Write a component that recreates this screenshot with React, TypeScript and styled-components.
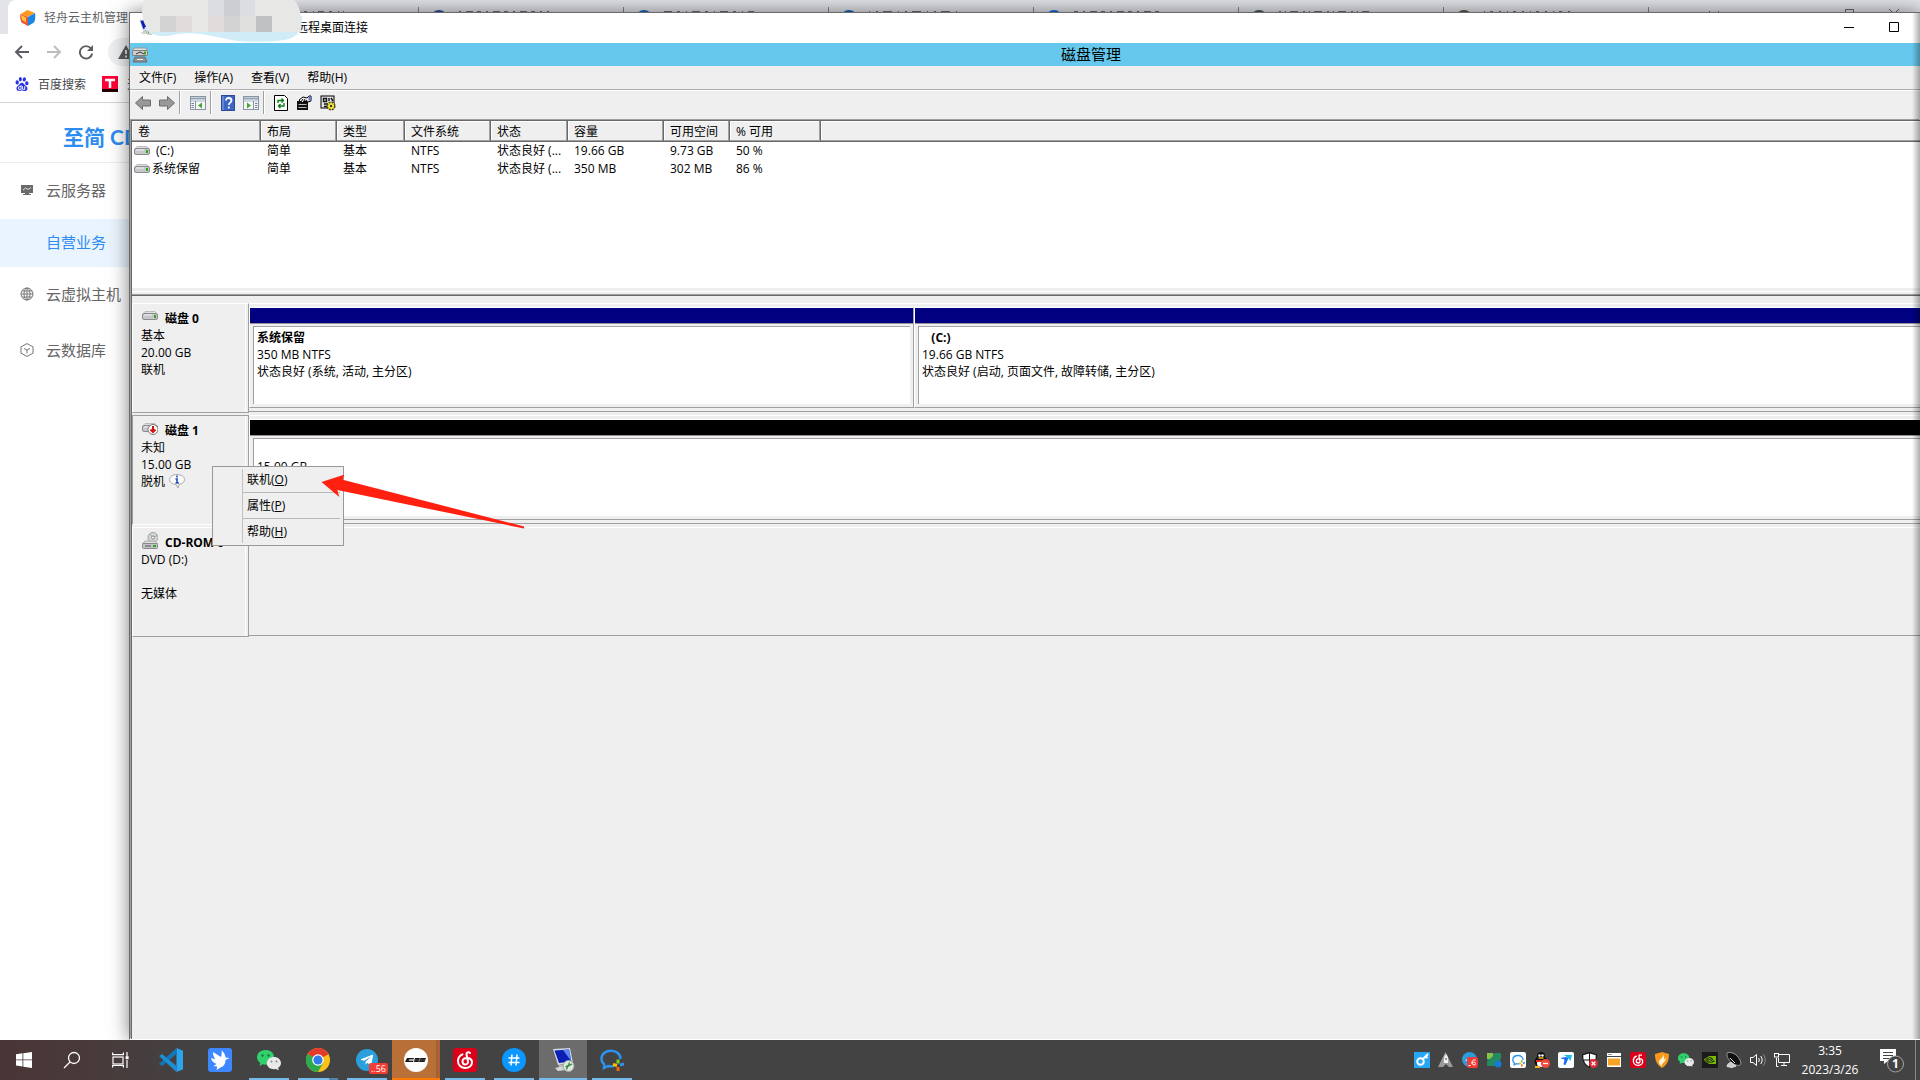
import React from "react";
import styled, { createGlobalStyle, css } from "styled-components";
import { SiBaidu, SiNvidia } from "react-icons/si";
import { FaTelegramPlane } from "react-icons/fa";

const face = "#efefef";
const shade = "#a0a0a0";
const edge = "#696969";

const GlobalStyle = createGlobalStyle`
  * { box-sizing: border-box; }
  html, body { margin: 0; }
  body {
    font-family: "Open Sans", "Noto Sans CJK SC", sans-serif;
    font-size: 12px;
    line-height: 17px;
    color: #000;
  }
  button {
    font: inherit;
    color: inherit;
    background: none;
    border: 0;
    padding: 0;
    display: flex;
    align-items: center;
    justify-content: center;
  }
  a { color: inherit; text-decoration: none; }
  svg { display: block; flex: none; }
`;

const Desktop = styled.div`
  display: flex;
  flex-direction: column;
  height: 100vh;
  overflow: hidden;
  background: #fff;
`;

const Workspace = styled.div`
  position: relative;
  flex: 1;
  min-height: 0;
  overflow: hidden;
`;

/* ---------- browser ---------- */

const Browser = styled.section`
  position: absolute;
  inset: 0;
  background: #fff;
`;

const TabStrip = styled.div`
  display: flex;
  height: 34px;
  padding-left: 8px;
  background: #e2e4e9;
  overflow: hidden;
`;

const ActiveTab = styled.button`
  && {
    flex: none;
    width: 206px;
    justify-content: flex-start;
    gap: 8px;
    padding: 1px 0 0 12px;
    background: #fff;
    border-radius: 8px 8px 0 0;
    color: #5f6368;
    white-space: nowrap;
    overflow: hidden;
  }
`;

const Tab = styled.button`
  && {
    flex: none;
    align-self: flex-start;
    width: 205px;
    height: 20px;
    margin-top: 7px;
    padding: 3px 0 0 12px;
    align-items: flex-start;
    justify-content: flex-start;
    gap: 12px;
    border-right: 1px solid #808386;
  }
`;

const StripControls = styled.div`
  display: flex;
  flex: 1;
  justify-content: flex-end;
  gap: 34px;
  padding: 9px 20px 0 0;
`;

const NavBar = styled.div`
  display: flex;
  align-items: center;
  gap: 16px;
  height: 36px;
  padding-left: 14px;
`;

const Omnibox = styled.label`
  display: flex;
  flex: 1;
  align-items: center;
  gap: 6px;
  height: 28px;
  margin-left: -2px;
  padding-left: 10px;
  border-radius: 14px;
  background: #eef0f2;
  input {
    flex: 1;
    border: 0;
    background: none;
  }
`;

const Bookmarks = styled.nav`
  display: flex;
  align-items: center;
  gap: 16px;
  height: 33px;
  padding: 0 0 4px 15px;
  border-bottom: 1px solid #d4d4d4;
  color: #45484b;
  a {
    display: flex;
    align-items: center;
    gap: 9px;
  }
`;

const Brand = styled.h1`
  margin: 0;
  height: 60px;
  padding: 8px 0 0 63px;
  border-bottom: 1px solid #ededed;
  font: bold 21px/52px Lato, "Noto Sans CJK SC", sans-serif;
  color: #2d8cf0;
`;

const SideLink = styled.a<{ $active?: boolean }>`
  display: flex;
  align-items: center;
  gap: 12px;
  height: ${(p) => (p.$active ? 48 : 56)}px;
  padding: 0 0 2px ${(p) => (p.$active ? 46 : 20)}px;
  font-size: 15px;
  background: ${(p) => (p.$active ? "#eaf4ff" : "none")};
  && { color: ${(p) => (p.$active ? "#2d8cf0" : "#666")}; }
`;

/* ---------- remote desktop window ---------- */

const RemoteWindow = styled.section`
  position: absolute;
  top: 12px;
  left: 129px;
  right: 0;
  bottom: 0;
  display: flex;
  flex-direction: column;
  border: solid #6b6b6e;
  border-width: 1px 0 0 1px;
  border-bottom: 1px solid #fff;
  background: ${face};
  box-shadow: 0 0 18px rgba(0, 0, 0, 0.5);
  &::after {
    content: "";
    position: absolute;
    inset: 0 0 0 auto;
    width: 8px;
    background: linear-gradient(90deg, transparent, rgba(0, 0, 0, 0.32));
    pointer-events: none;
  }
`;

const RemoteTitle = styled.header`
  display: flex;
  align-items: center;
  height: 30px;
  padding: 0 21px 2px 8px;
  background: #fff;
  span {
    flex: 1;
    padding-left: 142px;
  }
`;

const WindowButtons = styled.div`
  display: flex;
  gap: 35px;
`;

const ConsoleTitle = styled.header`
  display: flex;
  align-items: center;
  height: 23px;
  padding-left: 2px;
  background: #66c8ec;
  h2 {
    flex: 1;
    margin: 0;
    padding-left: 114px;
    font-size: 15px;
    font-weight: normal;
    text-align: center;
  }
`;

const MenuBar = styled.nav`
  display: flex;
  height: 24px;
  border-bottom: 1px solid #b0b0b0;
  button { padding: 0 9px; }
`;

const ToolBar = styled.div`
  display: flex;
  align-items: center;
  gap: 8px;
  height: 29px;
  padding: 0 0 5px 5px;
  border-top: 1px solid #fff;
`;

const ToolRule = styled.i`
  align-self: stretch;
  width: 2px;
  margin: 0 1px 0 -4px;
  border-left: 1px solid ${shade};
  border-right: 1px solid #fff;
`;

const Console = styled.div`
  display: flex;
  flex: 1;
  flex-direction: column;
  min-height: 0;
  border: solid ${edge};
  border-width: 1px 0 0 1px;
  box-shadow: -1px -1px 0 ${shade};
  margin: 1px 0 0 1px;
`;

const ListPane = styled.div`
  height: 167px;
  background: #fff;
`;

const VolumeTable = styled.table`
  width: 100%;
  table-layout: fixed;
  border-collapse: collapse;
  th {
    height: 21px;
    padding: 0 6px;
    font-weight: normal;
    text-align: left;
    background: ${face};
    box-shadow: inset -1px -1px 0 ${edge}, inset -2px -2px 0 ${shade}, inset 1px 1px 0 #fff;
  }
  th:last-child { box-shadow: inset 0 -1px 0 ${edge}, inset 0 -2px 0 ${shade}, inset 1px 1px 0 #fff; }
  td {
    height: 18px;
    padding: 0 6px 1px;
    line-height: 16px;
    white-space: nowrap;
  }
  td:first-child { padding: 0 2px 1px; }
`;

const VolumeName = styled.span<{ $indent?: boolean }>`
  display: flex;
  align-items: center;
  gap: ${(p) => (p.$indent ? 6 : 2)}px;
`;

const Splitter = styled.div`
  height: 8px;
  padding-top: 3px;
  background: ${face};
  border-bottom: 1px solid ${edge};
  box-shadow: inset 0 -1px 0 ${shade};
  &::before {
    content: "";
    display: block;
    border-top: 1px solid #fff;
  }
`;

const DiskPane = styled.div`
  position: relative;
  flex: 1;
  padding-top: 7px;
`;

const DiskRow = styled.article`
  display: grid;
  grid-template-columns: 117px 1fr;
  align-items: start;
  height: 112px;
`;

const DiskLabel = styled.div<{ $pressed?: boolean }>`
  height: 110px;
  padding: 6px 0 0 8px;
  border: 1px solid #fff;
  border-color: ${(p) => (p.$pressed ? `${shade} ${shade} #fff ${shade}` : `#fff ${shade} ${shade} #fff`)};
  box-shadow: inset -2px 0 0 ${face}, inset -3px 0 0 #fff;
  div {
    display: flex;
    gap: 4px;
    height: 17px;
  }
`;

const DiskName = styled.h3`
  display: flex;
  gap: 7px;
  margin: 0;
  padding-left: 1px;
  font-size: 12px;
  line-height: 17px;
  white-space: nowrap;
  svg { margin-top: -2px; }
`;

const Partitions = styled.div`
  display: flex;
  height: 109px;
  padding: 3px 0;
  border-top: 1px solid #fff;
  border-bottom: 1px solid ${shade};
`;

const Partition = styled.div<{ $wide?: boolean }>`
  display: flex;
  flex-direction: column;
  gap: 2px;
  ${(p) => (p.$wide ? "flex: 1;" : "width: 665px;")}
  padding-bottom: 3px;
  border: 1px solid ${shade};
  border-top-color: #fff;
  border-left-color: #fff;
  ${(p) => p.$wide && "border-right: 0;"}
`;

const Strip = styled.div<{ $color: string }>`
  height: 16px;
  background: ${(p) => p.$color};
  border-bottom: 1px solid #9a8f9a;
`;

const PartitionBody = styled.div<{ $wide?: boolean }>`
  flex: 1;
  margin: 0 ${(p) => (p.$wide ? 0 : 3)}px 0 3px;
  padding: 2px 3px;
  border: solid ${shade};
  border-width: 1px 0 0 1px;
  background: #fff;
  strong, span {
    display: block;
    min-height: 17px;
  }
  strong { white-space: pre; }
`;

const ContextMenu = styled.div`
  position: absolute;
  top: 170px;
  left: 80px;
  width: 132px;
  border: 1px solid #999;
  background: ${face};
  padding: 0 3px 0 29px;
  &::before {
    content: "";
    position: absolute;
    inset: 2px auto 2px 29px;
    border-left: 1px solid #c0c0c0;
  }
  button {
    width: 100%;
    height: 26px;
    padding-left: 5px;
    justify-content: flex-start;
    border-bottom: 1px solid #b8b8b8;
  }
  button:last-child {
    border-bottom: 0;
    padding-bottom: 2px;
  }
`;

const Pointer = styled.svg`
  position: absolute;
  top: 178px;
  left: 189px;
`;

const Smudge = styled.svg`
  position: absolute;
  top: 0;
  left: 142px;
`;

/* ---------- taskbar ---------- */

const Taskbar = styled.footer`
  display: flex;
  align-items: stretch;
  height: 40px;
  background: linear-gradient(90deg, #4a3536, #483b3b 110px, #434343 200px);
  color: #fff;
`;

const SystemButton = styled.button`
  width: 48px;
`;

const Apps = styled.div`
  display: flex;
  flex: 1;
  gap: 1px;
  padding-left: 3px;
`;

type AppState = "idle" | "open" | "stacked" | "active" | "alert";

const AppButton = styled.button<{ $state: AppState }>`
  && {
    position: relative;
    width: 48px;
    ${(p) => p.$state === "active" && "background: #6c6c6c;"}
    ${(p) => p.$state === "alert" && "background: linear-gradient(90deg, #b87038 44px, #985c30 44px, #a86434 45px);"}
  }
  &::after {
    content: "";
    position: absolute;
    bottom: 0;
    height: 2px;
    ${(p) =>
      p.$state === "active" || p.$state === "alert"
        ? css`left: 0; right: 0;`
        : css`left: 4px; right: 4px;`}
    background: ${(p) =>
      ({
        idle: "none",
        open: "#76b9ed",
        active: "#76b9ed",
        stacked: "linear-gradient(90deg, #76b9ed 31px, #5484ab 31px)",
        alert: "#ff7800",
      })[p.$state]};
  }
`;

const Tray = styled.div`
  display: flex;
  button { width: 24px; }
`;

const Tile = styled.span<{ $bg: string; $size: number; $radius?: number }>`
  display: flex;
  align-items: center;
  justify-content: center;
  width: ${(p) => p.$size}px;
  height: ${(p) => p.$size}px;
  border-radius: ${(p) => p.$radius ?? 2}px;
  background: ${(p) => p.$bg};
`;

const TrayClock = styled.button`
  && {
    flex-direction: column;
    width: 72px;
    line-height: 19px;
    padding-bottom: 1px;
  }
`;

const NoticeButton = styled.button`
  && {
    width: 49px;
    padding-left: 2px;
  }
`;

const ShowDesktop = styled.button`
  && {
    width: 5px;
    border-left: 1px solid #8a8a8a;
  }
`;

/* ---------- drawings ---------- */

const Drive = ({ children }: { children?: React.ReactNode }) => (
  <svg width="16" height="16" viewBox="0 0 16 16">
    <path d="M3 3.500h10l2.500 3H.5z" fill="#dfdfe2" stroke="#bdbdc0" />
    <rect x=".5" y="5.500" width="15" height="6" rx="1.500" fill="#c6c6cb" stroke="#8b8b92" />
    <path d="M2 7h8" stroke="#f2f2f2" />
    <rect x="12" y="7" width="2" height="3" fill="#2fa51c" />
    {children}
  </svg>
);

const OfflineDrive = () => (
  <Drive>
    <circle cx="11" cy="9.500" r="5" fill="#fff" stroke="#777" />
    <path d="M11 6v6M8.500 9.500L11 12l2.500-2.500" stroke="#d21414" strokeWidth="2" fill="none" />
  </Drive>
);

const DiscDrive = () => (
  <svg width="16" height="18" viewBox="0 0 16 18">
    <circle cx="11" cy="5.500" r="5" fill="#d6d6d6" stroke="#a0a0a0" />
    <path d="M11 5.500L7.500 2M11 5.500l4-2" stroke="#7fb48a" />
    <circle cx="11" cy="5.500" r="1.500" fill="#fff" stroke="#888" />
    <path d="M3 9h10l2.500 3H.5z" fill="#dcdcdc" stroke="#aaa" />
    <rect x=".5" y="11.500" width="15" height="5" rx="1" fill="#c3c3c8" stroke="#88888c" />
    <path d="M3 14h6" stroke="#555" />
    <rect x="11" y="13" width="3" height="2" fill="#2fa51c" />
  </svg>
);

const InfoBalloon = () => (
  <svg width="16" height="16" viewBox="0 0 16 16">
    <path d="M8 1.500c4 0 7.500 2 7.500 5s-3 4.700-5.500 5L9 15l-2-3.500c-3.500-.3-6.500-2.200-6.500-5s3.500-5 7.500-5z" fill="#fafafa" stroke="#a8a8a8" />
    <path d="M8 2.500v2M6.500 6H8v4M6.500 10h3.500" stroke="#1f52c4" strokeWidth="1.600" fill="none" />
  </svg>
);

const ConsoleIcon = () => (
  <svg width="16" height="16" viewBox="0 0 16 16">
    <path d="M3 10h10l2 5H1z" fill="#8b8f93" stroke="#6a6d70" />
    <path d="M2 1h12l1.500 4H.5z" fill="#e0e0e0" stroke="#999" />
    <rect x=".5" y="3.500" width="15" height="5" rx="1" fill="#cfcfcf" stroke="#7d7d7d" />
    <path d="M4 7l4-2 4 2" stroke="#333" fill="none" />
    <rect x="12" y="4.500" width="2" height="3" fill="#35a51c" />
    <path d="M5 12.500h6" stroke="#eee" />
  </svg>
);

const Arrow = ({ flip }: { flip?: boolean }) => (
  <svg width="16" height="16" viewBox="0 0 16 16">
    <path
      d={flip ? "M15.500 8L8.500 1.500v3.500H.5v6h8v3.500z" : "M.5 8l7-6.500v3.500h8v6h-8v3.500z"}
      fill="#989898"
      stroke="#6c6c6c"
    />
  </svg>
);

const PaneIcon = ({ flip }: { flip?: boolean }) => (
  <svg width="16" height="14" viewBox="0 0 16 14">
    <rect x=".5" y=".5" width="15" height="13" fill="#f7f7f7" stroke="#8a94a0" />
    <path d="M1 2.500h14" stroke="#8fa3bb" strokeWidth="2" />
    <path d="M1 5h14" stroke="#a9b6c4" />
    {flip ? (
      <>
        <path d="M10.500 5v9" stroke="#8a94a0" />
        <path d="M12 7.500h2.500M12 9.500h2.500M12 11.500h2.500" stroke="#6b83a5" />
        <path d="M4 6.500l4 3-4 3z" fill="#42a832" />
      </>
    ) : (
      <>
        <path d="M5.500 5v9" stroke="#8a94a0" />
        <path d="M1.500 7.500H4M1.500 9.500H4M1.500 11.500H4" stroke="#6b83a5" />
        <path d="M12 6.500l-4 3 4 3z" fill="#42a832" />
      </>
    )}
  </svg>
);

const HelpIcon = () => (
  <svg width="14" height="16" viewBox="0 0 14 16">
    <rect x=".5" y=".5" width="13" height="15" fill="#3d66c4" stroke="#2d4a96" />
    <path d="M2 1v14" stroke="#8ba6e6" />
    <path d="M5 5.500c0-3.500 5.500-3.200 5.500 0 0 2.200-2.700 2-2.700 4.500M7.800 11.500v2" stroke="#fff" strokeWidth="1.800" fill="none" />
  </svg>
);

const RefreshIcon = () => (
  <svg width="14" height="16" viewBox="0 0 14 16">
    <path d="M.5.500h10l3 3v12H.5z" fill="#fff" stroke="#000" />
    <path d="M4 8V5.500h5M7.500 3.500l2 2-2 2M10 8v3H5M6.500 9l-2 2 2 2" stroke="#0a7d1c" strokeWidth="1.400" fill="none" />
  </svg>
);

const PropertiesIcon = () => (
  <svg width="16" height="16" viewBox="0 0 16 16">
    <path d="M1 6h11v9H1z" fill="#111" />
    <path d="M2.500 9.500h8M2.500 12.500h8" stroke="#bbb" />
    <path d="M3 5l4-3 4 1 2-2h2v5l-3 1-3-1-3 2z" fill="#f4f4f4" stroke="#000" />
    <path d="M7 4l-2 3M9 4L7 8M11 5l-2 3" stroke="#000" />
    <path d="M12.500 1.500h3v4h-3z" fill="#6d78b8" />
  </svg>
);

const SettingsIcon = () => (
  <svg width="16" height="16" viewBox="0 0 16 16">
    <rect x="1" y="1" width="13" height="12" fill="#e4e4e4" stroke="#000" />
    <path d="M3.500 3.500h3v3h-3zM9 3v3M8 9H4M4 11.500h4M11 3l2 3" stroke="#111" strokeWidth="1.400" fill="none" />
    <circle cx="11" cy="11" r="3.800" fill="#f4e842" stroke="#4a4608" strokeWidth="1.500" strokeDasharray="2 1" />
    <circle cx="11" cy="11" r="1.200" fill="#333" />
  </svg>
);

const CubeIcon = () => (
  <svg width="16" height="16" viewBox="0 0 16 16">
    <path d="M7.500 0L15 3 8 7 .5 4z" fill="#ff9a1f" />
    <path d="M.5 4L8 7v9l-6.500-3.500C0 9 0 7 .5 4z" fill="#f0532d" />
    <path d="M15 3L8 7v9l6-3.500c1.500-3 1.500-6 1-9.500z" fill="#1689e8" />
    <path d="M1 5l5 2.500v5L2 10z" fill="#ffc43a" />
  </svg>
);

const BrowserArrow = ({ flip }: { flip?: boolean }) => (
  <svg width="16" height="16" viewBox="0 0 16 16">
    <path
      d={flip ? "M1 8h13M8 2l6 6-6 6" : "M15 8H2M8 2L2 8l6 6"}
      stroke={flip ? "#bbbdbf" : "#5a5d61"}
      strokeWidth="1.900"
      fill="none"
    />
  </svg>
);

const ReloadIcon = () => (
  <svg width="16" height="16" viewBox="0 0 16 16">
    <path d="M13 4.500A6.200 6.200 0 1 0 14.200 9.500" stroke="#5a5d61" strokeWidth="1.900" fill="none" />
    <path d="M15 1v6H9z" fill="#5a5d61" />
  </svg>
);

const WarningIcon = () => (
  <svg width="16" height="14" viewBox="0 0 16 14">
    <path d="M8 0l8 14H0z" fill="#5a5d61" />
    <path d="M8 5v4M8 10.500v2" stroke="#fff" strokeWidth="1.600" />
  </svg>
);

const ServerIcon = () => (
  <svg width="14" height="12" viewBox="0 0 14 12">
    <path d="M1 1h12v8H1zM5 9h4v1h2v1H3v-1h2z" fill="#6a6a6a" />
    <path d="M3 6l2.500-2L8 5.500l3-2" stroke="#ddd" fill="none" />
  </svg>
);

const GlobeIcon = () => (
  <svg width="14" height="14" viewBox="0 0 14 14" fill="none" stroke="#777">
    <circle cx="7" cy="7" r="6" />
    <ellipse cx="7" cy="7" rx="3" ry="6" />
    <path d="M7 1v12M1 7h12M2 4h10M2 10h10" />
  </svg>
);

const BoxIcon = () => (
  <svg width="14" height="14" viewBox="0 0 14 14" fill="none" stroke="#777">
    <path d="M7 .6l6 3.200v6.400l-6 3.200-6-3.200V3.800zM4 5.500L7 7l3-1.500M7 7v3.500" />
  </svg>
);

const RemoteIcon = ({ size }: { size: number }) => (
  <svg width={size} height={size} viewBox="0 0 24 24">
    <path d="M8 17h8l2 5H7z" fill="#b8b8b8" />
    <path d="M2 1l17-1 3 15-15 2z" fill="#d7dbe4" />
    <path d="M3.500 2.500L18 1.500l2.400 12L8 15z" fill="#0c1fb4" />
    <path d="M12 2L18 1.500l2.400 12z" fill="#5f86f0" />
    <path d="M4 20l9-2 2 4-8 1z" fill="#d5d5d5" />
    <circle cx="17.500" cy="18" r="5.500" fill="#dfe7df" stroke="#9aa79a" />
    <path d="M14.500 19l2.500-1.500-1.500 4M18.500 14.500l-1 3.500 3.500-2" stroke="#2b8a3a" strokeWidth="1.300" fill="none" />
  </svg>
);

const WeChatIcon = ({ size }: { size: number }) => (
  <svg width={size} height={size} viewBox="0 0 24 24">
    <path d="M8.500 2C4 2 0 5 0 9.300c0 2.500 1.300 4.400 3.300 5.700L2.500 18l3.300-1.700c6 1.500 11.200-2 11.200-7S13 2 8.500 2z" fill="#31d06c" />
    <circle cx="5.500" cy="7.500" r="1.200" fill="#157a3b" />
    <circle cx="11.500" cy="7.500" r="1.200" fill="#157a3b" />
    <path d="M17 9c-4 0-7.200 2.700-7.200 6.200 0 3.800 4 6.800 9 5.800l3 1.300-.7-2.500c1.700-1.200 2.900-2.800 2.900-4.600C24 11.700 21 9 17 9z" fill="#e9e9e9" />
    <circle cx="14.500" cy="13.500" r="1" fill="#888" />
    <circle cx="19.500" cy="13.500" r="1" fill="#888" />
  </svg>
);

const MusicIcon = ({ size }: { size: number }) => (
  <svg width={size} height={size} viewBox="0 0 24 24">
    <rect width="24" height="24" rx="3" fill="#dd001b" />
    <path
      d="M17 5c-1.500-1.300-4-.7-3.500 1.500l1.500 7c.3 1.800-1 3-2.700 3-1.600 0-2.800-1.200-2.800-2.900 0-2.200 1.800-3.600 4.500-3.600 3 0 5 1.800 5 4.500 0 3.200-3 5.500-6.700 5.500-4.300 0-7.300-3-7.300-6.800 0-3.200 1.700-5.700 4.500-6.900"
      stroke="#fff"
      strokeWidth="2"
      strokeLinecap="round"
      fill="none"
    />
  </svg>
);

const WindowsIcon = () => (
  <svg width="16" height="16" viewBox="0 0 16 16" fill="#fff">
    <path d="M0 2.200L6.500 1.300v6.200H0zM7.300 1.200L16 0v7.500H7.300zM0 8.300h6.500v6.200L0 13.600zM7.300 8.300H16V16l-8.700-1.200z" />
  </svg>
);

const SearchIcon = () => (
  <svg width="18" height="18" viewBox="0 0 18 18" fill="none" stroke="#fff" strokeWidth="1.300">
    <circle cx="11" cy="7" r="5.500" />
    <path d="M7 11l-6 6" />
  </svg>
);

const TaskViewIcon = () => (
  <svg width="17" height="16" viewBox="0 0 17 16" fill="none" stroke="#fff" strokeWidth="1.200">
    <rect x="1" y="5" width="10" height="7" />
    <path d="M.6.500v2.200h10.800V.5M.6 15.500v-2h10.800v2M15 0v4M15 8v8" />
    <rect x="14.200" y="4.800" width="1.800" height="1.800" fill="#fff" />
  </svg>
);

const CodeIcon = () => (
  <svg width="24" height="24" viewBox="0 0 24 24">
    <path d="M17.500 0L24 2.800v18.400L17.500 24z" fill="#2aa5ee" />
    <path d="M17.500 0v6L3 18 0 16z" fill="#1078b8" />
    <path d="M17.500 24v-6L3 6 0 8z" fill="#1b8fd6" />
  </svg>
);

const BirdIcon = () => (
  <svg width="24" height="24" viewBox="0 0 24 24">
    <rect width="24" height="24" rx="3" fill="#3f87ff" />
    <path d="M5 4l8 5c.500-2 1-4 .500-6.500 2.500 2 4 4.500 4 7l4 .5-4 2c0 4-2 6.500-5 7.500L8.500 22l.8-3.500L5.500 18l3-2C5 14.500 3.500 12.500 3 10l4.500 1.500C5.500 9 5 6.500 5 4z" fill="#fff" />
  </svg>
);

const ChromeIcon = () => (
  <svg width="24" height="24" viewBox="0 0 24 24">
    <circle cx="12" cy="12" r="12" fill="#fbc116" />
    <path d="M12 12L1.600 6A12 12 0 0 1 22.400 6z" fill="#e23b2e" />
    <path d="M1.600 6A12 12 0 0 0 12 24l5-9-5-3z" fill="#2da94f" />
    <path d="M12 6h10.400L12 12z" fill="#e23b2e" />
    <circle cx="12" cy="12" r="5.800" fill="#fff" />
    <circle cx="12" cy="12" r="4.600" fill="#2f7de9" />
  </svg>
);

const Badge = styled.span`
  position: absolute;
  right: 3px;
  bottom: 6px;
  padding: 0 2px;
  border-radius: 2px;
  background: #f23c34;
  font-size: 9px;
  line-height: 11px;
`;

const HashIcon = () => (
  <svg width="24" height="24" viewBox="0 0 24 24">
    <circle cx="12" cy="12" r="12" fill="#0c96ff" />
    <path d="M10 6.500L9 17.500M15 6.500l-1 11M6.500 10h11M6.500 14.500h11" stroke="#fff" strokeWidth="1.500" />
  </svg>
);

const RacerIcon = () => (
  <svg width="24" height="24" viewBox="0 0 24 24">
    <circle cx="12" cy="12" r="12" fill="#fff" />
    <path d="M3 10h7l-.5 1.200H5.500L5 12.800h4.500L9 14H1zM11 10h5l-1.500 4h-4.500zM16.500 10H22l-1.500 4H15z" fill="#161616" />
    <path d="M4 12h17" stroke="#777" strokeWidth=".6" />
  </svg>
);

const WeComIcon = ({ size }: { size: number }) => (
  <svg width={size} height={size} viewBox="0 0 24 24" fill="none">
    <path d="M20.500 11C20.500 6 16.500 2.800 11 2.800S1.500 6 1.500 10.500c0 3 1.200 4.800 2.800 6L4 20l4-2c2 .5 4 .5 6 0" stroke="#2c94ee" strokeWidth="2.400" />
    <path d="M18 11.500v4" stroke="#7ed321" strokeWidth="3" />
    <path d="M20 17l4-1" stroke="#2c94ee" strokeWidth="3" />
    <path d="M18 19v4" stroke="#fb6500" strokeWidth="3" />
    <path d="M13 16.500l4 1" stroke="#fcc000" strokeWidth="3" />
  </svg>
);

const KeyIcon = () => (
  <svg width="16" height="16" viewBox="0 0 16 16">
    <rect width="16" height="16" fill="#27a7f3" />
    <circle cx="6.500" cy="9.500" r="3.300" stroke="#fff" strokeWidth="2" fill="none" />
    <path d="M8.500 7.500L14 2M11 4l2.500 2" stroke="#fff" strokeWidth="2" />
  </svg>
);

const RocketIcon = () => (
  <svg width="16" height="16" viewBox="0 0 16 16">
    <path d="M7.500 0L15 15h-4l-3-3-3 3H0z" fill="#9b9b9b" />
    <path d="M8 2c2 2 2.500 5 2 9H6c-.5-4 0-7 2-9z" fill="#f2f2f2" />
    <circle cx="8" cy="7" r="1" fill="#777" />
  </svg>
);

const TrayTelegram = () => (
  <svg width="16" height="16" viewBox="0 0 16 16">
    <circle cx="7.500" cy="7.500" r="7.500" fill="#2d9cdb" />
    <path d="M3 8l4-1v3z" fill="#fff" />
    <rect x="5" y="5" width="11" height="11" rx="2" fill="#ee3d37" />
    <path d="M6.500 13.500h2M13.500 8c-3-.5-3.500 1-3.500 3s3.500 3 3.500.7-3.500-1.700-3.500 0" stroke="#fff" fill="none" />
  </svg>
);

const CloverIcon = () => (
  <svg width="16" height="16" viewBox="0 0 16 16">
    <path d="M1 1h6l1 1 1-1h6v6l-1 1 1 6-6-1-1 1H1V9l1-1-1-1z" fill="#258a62" />
    <path d="M1 1h6v3L4 7H1z" fill="#85c34b" />
    <circle cx="12" cy="12" r="3.500" fill="#167bd6" />
  </svg>
);

const PenguinIcon = () => (
  <svg width="16" height="16" viewBox="0 0 16 16">
    <ellipse cx="7" cy="9.500" rx="6.500" ry="5.500" fill="#111" />
    <circle cx="7" cy="4" r="4" fill="#111" />
    <ellipse cx="7" cy="11.500" rx="4" ry="3.500" fill="#fff" />
    <path d="M2 8h10v2H2z" fill="#e02a22" />
    <path d="M1 14h5v2H1z" fill="#fbb117" />
    <circle cx="5.500" cy="3.500" r="1.200" fill="#fff" />
    <circle cx="8.500" cy="3.500" r="1.200" fill="#fff" />
    <path d="M4.500 6h5" stroke="#fbb117" strokeWidth="1.500" />
    <circle cx="11.500" cy="11.500" r="4.500" fill="#ef4b3b" />
    <path d="M9 11.500h5" stroke="#fff" strokeWidth="1.300" />
  </svg>
);

const TodoIcon = () => (
  <svg width="16" height="16" viewBox="0 0 16 16">
    <rect width="16" height="16" rx="2" fill="#fff" />
    <path d="M6 3h8l-1.500 6L10 6z" fill="#17c0e8" />
    <path d="M2 6l6-1 2.500 1-3 7-2-.5 1-5z" fill="#1a6cf2" />
  </svg>
);

const ShieldIcon = () => (
  <svg width="16" height="16" viewBox="0 0 16 16">
    <path d="M7.500 0L15 2.500c0 6-2 10.500-7.500 13.500C2 13 0 8.500 0 2.500z" fill="#111" />
    <path d="M7 1.500L1.200 3.300 1.500 7.500H7zM8 1.500l5.800 1.800-.3 4.200H8zM2 8.500h5v6C4.500 13 2.800 11.500 2 8.500zM8 8.500h5c-.8 3-2.500 4.500-5 6z" fill="#fff" />
    <circle cx="11.500" cy="11.500" r="4.500" fill="#dd2c36" />
    <path d="M9.700 9.700l3.600 3.600M13.300 9.700l-3.600 3.600" stroke="#fff" strokeWidth="1.300" />
  </svg>
);

const CardIcon = () => (
  <svg width="16" height="14" viewBox="0 0 16 14">
    <path d="M1 0h14v3H1zM1 4h14v10H1z" fill="#fff" />
    <path d="M2 5.500h12v7H2z" fill="#f7a325" />
    <path d="M2.500 1.500h4" stroke="#333" strokeDasharray="1 1" />
  </svg>
);

const FlameShield = () => (
  <svg width="14" height="16" viewBox="0 0 14 16">
    <path d="M7 0l7 2c0 7-2 11-7 14C2 13 0 9 0 2z" fill="#f79a1c" />
    <path d="M8 2c1 4-4 5-4 8 0 2 1.500 3.500 3 4-1-3 4-4 4-8-1 1-2 1-2 2 0-2 0-4-1-6z" fill="#fff4dc" />
  </svg>
);

const DishIcon = () => (
  <svg width="16" height="16" viewBox="0 0 16 16">
    <path d="M1 1c5-2 12 2 14 10 0 2-2 3-5 2C5 12 0 5 1 1z" fill="#111" stroke="#999" />
    <path d="M4 6l5 5M2 12c2-2 4-2 5 0l3 2-4 1.500-5-1z" fill="#ccc" stroke="#ddd" />
  </svg>
);

const SpeakerIcon = () => (
  <svg width="16" height="14" viewBox="0 0 16 14" fill="none" stroke="#fff">
    <path d="M.5 4.500h2.500l3.500-3v11L3 9.500H.5z" />
    <path d="M8.500 5c1 1.300 1 2.700 0 4M10.700 3c2 2.500 2 5.500 0 8" />
    <path d="M13 1c3 3.500 3 8.500 0 12" stroke="#8c8c8c" />
  </svg>
);

const NetworkIcon = () => (
  <svg width="16" height="14" viewBox="0 0 16 14" fill="none" stroke="#fff">
    <path d="M4.500 1.500h11v8h-11V5M10 9.500v3M7 12.500h6M2.500 5v8.500h2" />
    <rect x=".5" y=".5" width="4" height="3.500" />
  </svg>
);

const NoticeIcon = () => (
  <svg width="26" height="26" viewBox="0 0 26 26">
    <path d="M1 2h16v12H9l-4 3v-3H1z" fill="#fff" />
    <path d="M4 5.500h10M4 8.500h10M4 11.500h6" stroke="#444" strokeWidth="1.200" />
    <circle cx="16.500" cy="17" r="8" fill="#434343" stroke="#a4a4a4" />
    <text x="16.500" y="21" fill="#fff" fontSize="12" fontWeight="bold" textAnchor="middle">1</text>
  </svg>
);

/* ---------- content ---------- */

const backgroundTabs = [
  { id: "a", color: "#3b6fd0", stub: "3 6 1 4 6 5" },
  { id: "b", color: "#2c4ea8", stub: "2 5 7 4 4 5" },
  { id: "c", color: "#1769c4", stub: "8 5 3 6 1 5" },
  { id: "d", color: "#1769c4", stub: "1 6 2 5 9 6" },
  { id: "e", color: "#1a66e8", stub: "4 5 2 5 7 4" },
  { id: "f", color: "#4a5560", stub: "2 4 1 4 8 5" },
  { id: "g", color: "#5d5548", stub: "1 5 3 6 2 6" },
];

const columns = [
  ["卷", 129],
  ["布局", 76],
  ["类型", 68],
  ["文件系统", 86],
  ["状态", 77],
  ["容量", 96],
  ["可用空间", 66],
  ["% 可用", 91],
] as const;

const volumes = [
  { name: "(C:)", indent: true, cells: ["简单", "基本", "NTFS", "状态良好 (...", "19.66 GB", "9.73 GB", "50 %"] },
  { name: "系统保留", indent: false, cells: ["简单", "基本", "NTFS", "状态良好 (...", "350 MB", "302 MB", "86 %"] },
];

const apps: { id: string; state: AppState; icon: React.ReactNode }[] = [
  { id: "code", state: "idle", icon: <CodeIcon /> },
  { id: "bird", state: "idle", icon: <BirdIcon /> },
  { id: "wechat", state: "open", icon: <WeChatIcon size={24} /> },
  { id: "chrome", state: "stacked", icon: <ChromeIcon /> },
  {
    id: "telegram",
    state: "open",
    icon: (
      <>
        <Tile $bg="#2a9fdc" $size={22} $radius={11}>
          <FaTelegramPlane size={14} />
        </Tile>
        <Badge>..56</Badge>
      </>
    ),
  },
  { id: "racer", state: "alert", icon: <RacerIcon /> },
  { id: "music", state: "open", icon: <MusicIcon size={24} /> },
  { id: "hash", state: "open", icon: <HashIcon /> },
  { id: "remote", state: "active", icon: <RemoteIcon size={24} /> },
  { id: "wecom", state: "open", icon: <WeComIcon size={24} /> },
];

const tray: [string, React.ReactNode][] = [
  ["key", <KeyIcon />],
  ["rocket", <RocketIcon />],
  ["telegram", <TrayTelegram />],
  ["clover", <CloverIcon />],
  ["wecom", <Tile $bg="#fff" $size={16}><WeComIcon size={13} /></Tile>],
  ["penguin", <PenguinIcon />],
  ["todo", <TodoIcon />],
  ["shield", <ShieldIcon />],
  ["card", <CardIcon />],
  ["music", <MusicIcon size={16} />],
  ["flame", <FlameShield />],
  ["wechat", <WeChatIcon size={16} />],
  ["nvidia", <Tile $bg="#1b1b1b" $size={16} $radius={0}><SiNvidia size={12} color="#76b900" /></Tile>],
  ["dish", <DishIcon />],
  ["speaker", <SpeakerIcon />],
  ["network", <NetworkIcon />],
];

const BrowserWindow = () => (
  <Browser>
    <TabStrip>
      <ActiveTab>
        <CubeIcon />
        轻舟云主机管理
      </ActiveTab>
      {backgroundTabs.map((t) => (
        <Tab key={t.id}>
          <svg width="16" height="16">
            <circle cx="8" cy="8" r="8" fill={t.color} />
          </svg>
          <svg width="90" height="12">
            <path d="M0 1.500h90" stroke="#6b6d72" strokeWidth="1" strokeDasharray={t.stub} />
          </svg>
        </Tab>
      ))}
      <StripControls>
        <svg width="100" height="12" fill="none" stroke="#666">
          <path d="M1 2l5 5 5-5" />
        </svg>
        <svg width="12" height="12" fill="none" stroke="#666">
          <path d="M3.500 3V.5h8v8H9M.5 3.500h8v8h-8z" />
        </svg>
        <svg width="12" height="12" fill="none" stroke="#666">
          <path d="M1 0l10 10M11 0L1 10" />
        </svg>
      </StripControls>
    </TabStrip>
    <NavBar>
      <button aria-label="后退"><BrowserArrow /></button>
      <button aria-label="前进"><BrowserArrow flip /></button>
      <button aria-label="刷新"><ReloadIcon /></button>
      <Omnibox>
        <WarningIcon />
        <input aria-label="地址" />
      </Omnibox>
    </NavBar>
    <Bookmarks>
      <a href="#baidu">
        <SiBaidu size={14} color="#2932e1" />
        百度搜索
      </a>
      <a href="#tmall">
        <svg width="16" height="16">
          <rect width="16" height="16" fill="#ff0036" />
          <path d="M0 14.500h16" stroke="#200" strokeWidth="3" />
          <path d="M3 4h10M8 4v8" stroke="#fff" strokeWidth="2.500" />
        </svg>
        天
      </a>
    </Bookmarks>
    <Brand>至简 CD</Brand>
    <nav>
      <SideLink href="#server"><ServerIcon />云服务器</SideLink>
      <SideLink href="#own" $active>自营业务</SideLink>
      <SideLink href="#host"><GlobeIcon />云虚拟主机</SideLink>
      <SideLink href="#database"><BoxIcon />云数据库</SideLink>
    </nav>
  </Browser>
);

const Volumes = () => (
  <ListPane>
    <VolumeTable>
      <colgroup>
        {columns.map(([name, width]) => <col key={name} width={width} />)}
        <col />
      </colgroup>
      <thead>
        <tr>
          {columns.map(([name]) => <th key={name}>{name}</th>)}
          <th />
        </tr>
      </thead>
      <tbody>
        {volumes.map((v) => (
          <tr key={v.name}>
            <td>
              <VolumeName $indent={v.indent}><Drive />{v.name}</VolumeName>
            </td>
            {v.cells.map((c, i) => <td key={i}>{c}</td>)}
            <td />
          </tr>
        ))}
      </tbody>
    </VolumeTable>
  </ListPane>
);

const Disks = () => (
  <DiskPane>
    <DiskRow>
      <DiskLabel>
        <DiskName><Drive />磁盘 0</DiskName>
        <div>基本</div>
        <div>20.00 GB</div>
        <div>联机</div>
      </DiskLabel>
      <Partitions>
        <Partition>
          <Strip $color="#000080" />
          <PartitionBody>
            <strong>系统保留</strong>
            <span>350 MB NTFS</span>
            <span>状态良好 (系统, 活动, 主分区)</span>
          </PartitionBody>
        </Partition>
        <Partition $wide>
          <Strip $color="#000080" />
          <PartitionBody $wide>
            <strong>{"   (C:)"}</strong>
            <span>19.66 GB NTFS</span>
            <span>状态良好 (启动, 页面文件, 故障转储, 主分区)</span>
          </PartitionBody>
        </Partition>
      </Partitions>
    </DiskRow>
    <DiskRow>
      <DiskLabel $pressed>
        <DiskName><OfflineDrive />磁盘 1</DiskName>
        <div>未知</div>
        <div>15.00 GB</div>
        <div>脱机<InfoBalloon /></div>
      </DiskLabel>
      <Partitions>
        <Partition $wide>
          <Strip $color="#000" />
          <PartitionBody $wide>
            <strong />
            <span>15.00 GB</span>
          </PartitionBody>
        </Partition>
      </Partitions>
    </DiskRow>
    <DiskRow>
      <DiskLabel>
        <DiskName><DiscDrive />CD-ROM 0</DiskName>
        <div>DVD (D:)</div>
        <div />
        <div>无媒体</div>
      </DiskLabel>
      <Partitions />
    </DiskRow>
    <ContextMenu>
      <button>联机(<u>O</u>)</button>
      <button>属性(<u>P</u>)</button>
      <button>帮助(<u>H</u>)</button>
    </ContextMenu>
    <Pointer width="206" height="58" viewBox="0 0 206 58">
      <path d="M0.500 8L23 0.700l-1.300 5L203 52.500v2L16.300 16l2 7z" fill="#ff2010" />
    </Pointer>
  </DiskPane>
);

const App = () => (
  <Desktop>
    <GlobalStyle />
    <Workspace>
      <BrowserWindow />
      <RemoteWindow>
        <RemoteTitle>
          <RemoteIcon size={16} />
          <span>远程桌面连接</span>
          <WindowButtons>
            <button aria-label="最小化">
              <svg width="10" height="10"><path d="M0 5.500h10" stroke="#000" /></svg>
            </button>
            <button aria-label="最大化">
              <svg width="10" height="10"><path d="M.5.500h9v9h-9z" stroke="#000" fill="none" /></svg>
            </button>
          </WindowButtons>
        </RemoteTitle>
        <ConsoleTitle>
          <ConsoleIcon />
          <h2>磁盘管理</h2>
        </ConsoleTitle>
        <MenuBar>
          <button>文件(F)</button>
          <button>操作(A)</button>
          <button>查看(V)</button>
          <button>帮助(H)</button>
        </MenuBar>
        <ToolBar>
          <button aria-label="后退"><Arrow /></button>
          <button aria-label="前进"><Arrow flip /></button>
          <ToolRule />
          <button aria-label="显示树"><PaneIcon /></button>
          <ToolRule />
          <button aria-label="帮助"><HelpIcon /></button>
          <button aria-label="操作窗格"><PaneIcon flip /></button>
          <ToolRule />
          <button aria-label="刷新"><RefreshIcon /></button>
          <button aria-label="属性"><PropertiesIcon /></button>
          <button aria-label="设置"><SettingsIcon /></button>
        </ToolBar>
        <Console>
          <Volumes />
          <Splitter />
          <Disks />
        </Console>
      </RemoteWindow>
      <Smudge width="160" height="42" viewBox="0 0 160 42">
        <path d="M2 28c10 10 22 9 34 6 20-3 40 4 60 7 16 1 32 1 46-1 14-2 18-10 18-24L20 16z" fill="#cfecf7" />
        <path d="M2 0h150c6 6 8 16 7 32H8C0 24-2 10 2 0z" fill="#e7e7e6" />
        <path d="M66 0h16v16H66zM98 0h15v16H98z" fill="#dcdde0" />
        <path d="M82 0h16v16H82z" fill="#cdced3" />
        <path d="M18 16h16v16H18zM82 16h16v16H82z" fill="#d4d3d3" />
        <path d="M34 16h16v16H34zM66 16h16v16H66z" fill="#dfdcdb" />
        <path d="M114 16h16v16h-16z" fill="#c0c1c3" />
        <path d="M98 16h16v16H98z" fill="#e0e0df" />
      </Smudge>
    </Workspace>
    <Taskbar>
      <SystemButton aria-label="开始"><WindowsIcon /></SystemButton>
      <SystemButton aria-label="搜索"><SearchIcon /></SystemButton>
      <SystemButton aria-label="任务视图"><TaskViewIcon /></SystemButton>
      <Apps>
        {apps.map((a) => (
          <AppButton key={a.id} $state={a.state} aria-label={a.id}>{a.icon}</AppButton>
        ))}
      </Apps>
      <Tray>
        {tray.map(([id, icon]) => <button key={id} aria-label={id}>{icon}</button>)}
        <TrayClock>
          <span>3:35</span>
          <span>2023/3/26</span>
        </TrayClock>
        <NoticeButton aria-label="通知"><NoticeIcon /></NoticeButton>
        <ShowDesktop aria-label="显示桌面" />
      </Tray>
    </Taskbar>
  </Desktop>
);

export default App;
